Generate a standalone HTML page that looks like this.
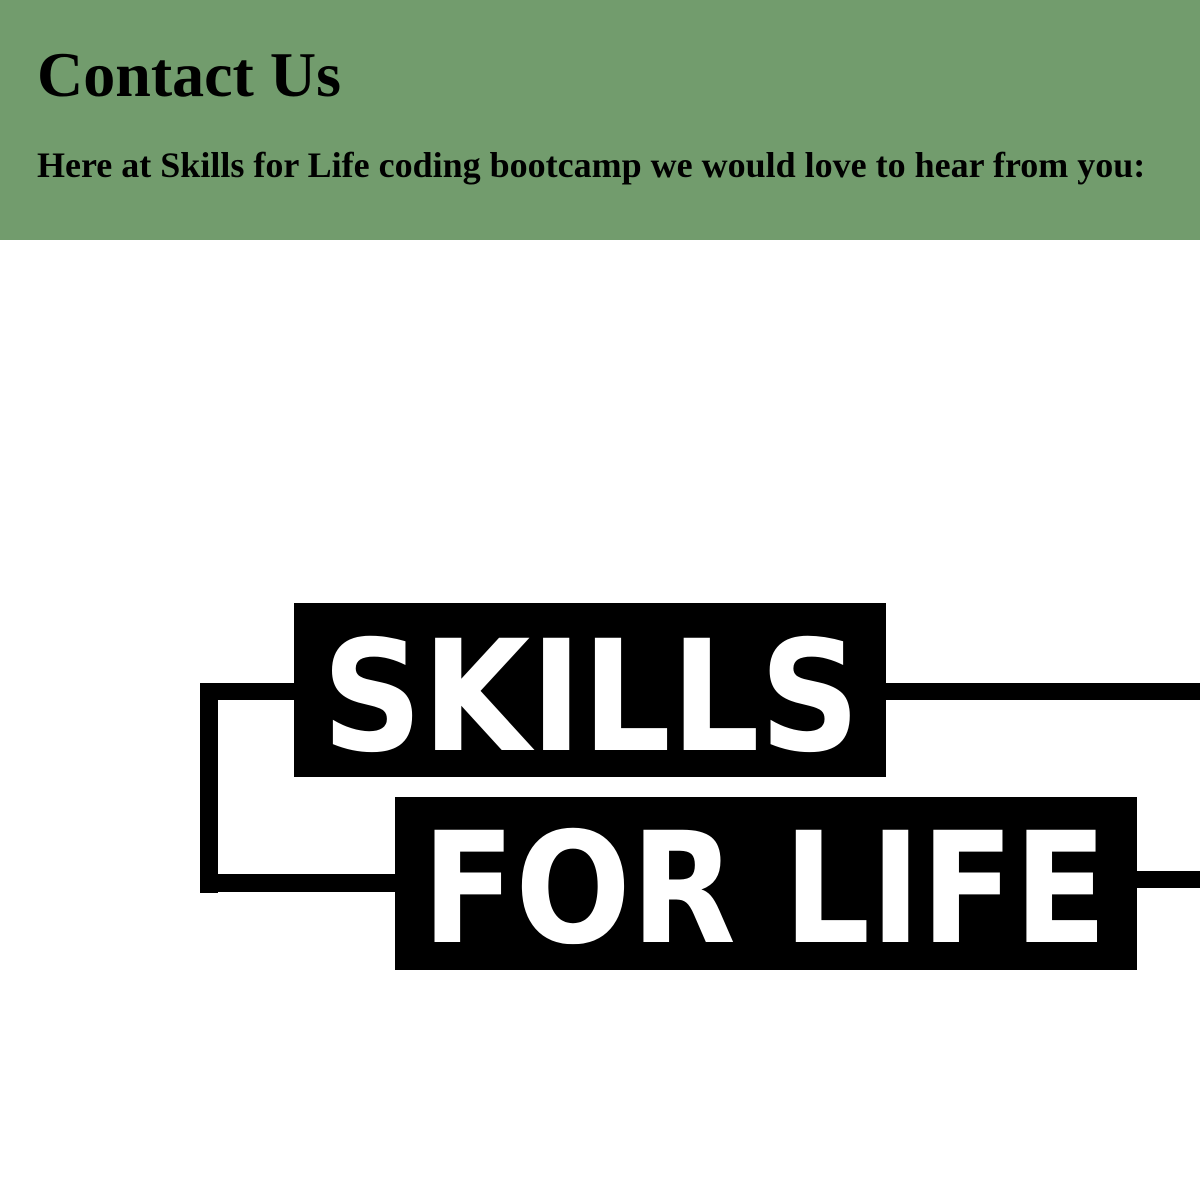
<!DOCTYPE html>
<html><head><style>
html,body{margin:0;padding:0;background:#fff;}
.hdr{position:absolute;left:0;top:0;width:1200px;height:240px;background:#729c6d;}
h1{position:absolute;left:37px;top:43px;margin:0;font:bold 64px "Liberation Serif",serif;line-height:1;white-space:nowrap;}
h2{position:absolute;left:37px;top:147px;margin:0;font:bold 36px "Liberation Serif",serif;line-height:1;white-space:nowrap;}
svg{position:absolute;left:0;top:0;}
</style></head><body>
<div class="hdr"><h1>Contact Us</h1><h2>Here at Skills for Life coding bootcamp we would love to hear from you:</h2></div>
<svg width="1200" height="1202" viewBox="0 0 1200 1202">
<g fill="#000">
<rect x="200" y="683" width="100" height="17"/>
<rect x="200" y="683" width="18" height="210"/>
<rect x="200" y="874" width="200" height="18"/>
<rect x="880" y="683" width="320" height="17"/>
<rect x="1130" y="871" width="70" height="17"/>
<rect x="294" y="603" width="592" height="174"/>
<rect x="395" y="797" width="742" height="173"/>
</g>
<g fill="#fff" font-family="DejaVu Sans, sans-serif" font-weight="bold" font-size="154">
<text x="322" y="750" textLength="538" lengthAdjust="spacingAndGlyphs">SKILLS</text>
<text x="422" y="942" textLength="685" lengthAdjust="spacingAndGlyphs">FOR LIFE</text>
</g>
</svg>
</body></html>
